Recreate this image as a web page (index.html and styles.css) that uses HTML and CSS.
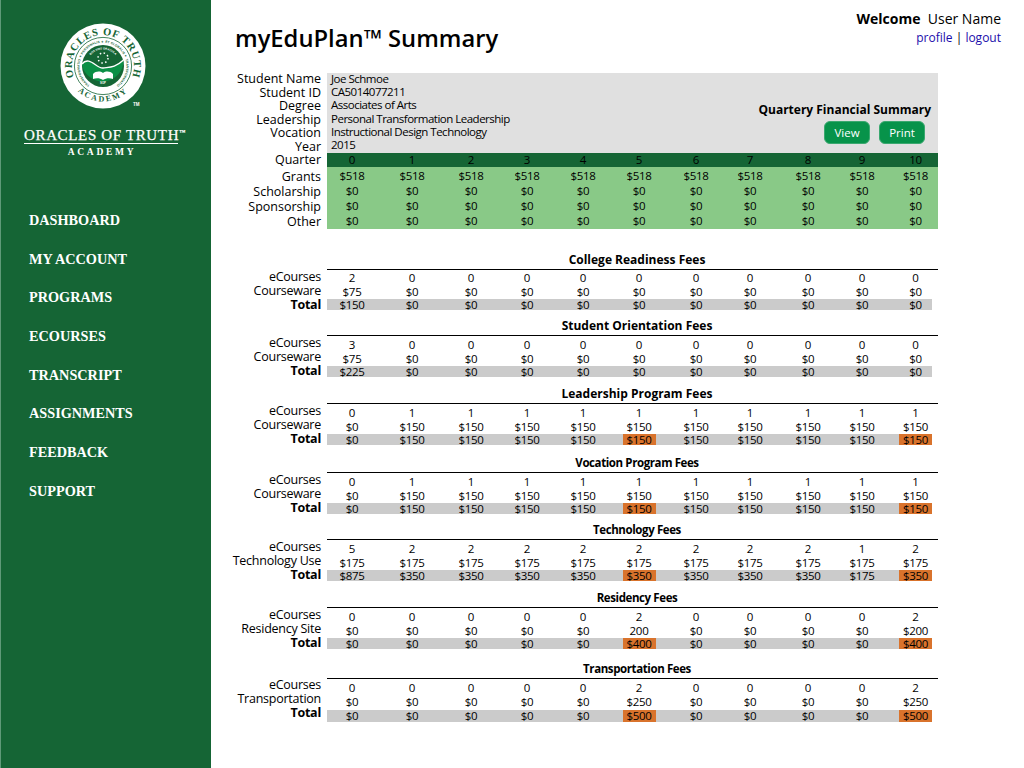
FILE: index.html
```html
<!DOCTYPE html>
<html lang="en">
<head>
    <meta charset="UTF-8">
    <title>myEduPlan Summary</title>
    <link rel="stylesheet" href="styles.css">
</head>
<body>
<div class="page">
    <aside class="sidebar">
        <div class="logo">
            <svg width="100" height="104" viewBox="0 0 100 104">
                <defs>
                    <path id="arcTop" d="M23.15 64.5a31 31 0 1 1 53.7 0"/>
                    <path id="arcBottom" d="M14.5 49a35.5 35.5 0 0 0 71 0"/>
                    <path id="arcInner" d="M50 72.4a23.4 23.4 0 1 1 .01 0"/>
                    <path id="arcMotto" d="M33.5 49a16.5 16.5 0 0 1 33 0"/>
                </defs>
                <circle cx="50" cy="49" r="42.5" fill="#fff"/>
                <circle cx="50" cy="49" r="28.6" fill="none" stroke="#156535" stroke-width=".8"/>
                <text class="logo-ring"><textPath href="#arcTop" startOffset="50%" text-anchor="middle">ORACLES OF TRUTH</textPath></text>
                <text class="logo-academy"><textPath href="#arcBottom" startOffset="50%" text-anchor="middle">ACADEMY</textPath></text>
                <text class="logo-tiny"><textPath href="#arcInner" startOffset="50%" text-anchor="middle">TRANSFORMATIO ✦ PERSONALIS ✦ ET GLOBALIS ✦ TRANSFORMATIO</textPath></text>
                <circle cx="50" cy="49" r="21" fill="#156535"/>
                <path d="M29 47c7-9 15 5 21 4s12 0 20.500-8a21 21 0 0 1-41.500 5z" fill="#0a8f45"/>
                <path d="M29 47c7-9 15 5 21 4s12 0 20.500-8" fill="none" stroke="#fff" stroke-width="1.4"/>
                <text class="logo-motto"><textPath href="#arcMotto" startOffset="50%" text-anchor="middle">BOS VINT ORACULA</textPath></text>
                <circle cx="50" cy="41" r="5" fill="none" stroke="#fff" stroke-width="1.5" stroke-dasharray="1.5 2.43"/>
                <path d="M40 62v-5c3-3 7-3 10-1 3-2 7-2 10 1v5c-3-1-7-1-10 1-3-2-7-2-10-1z" fill="#fff"/>
                <text x="50" y="67" class="logo-sop">SOP</text>
                <text x="80" y="89" class="logo-tm">TM</text>
            </svg>
        </div>
        <div class="brand">
            <div class="brand-name">ORACLES OF TRUTH<sup>™</sup></div>
            <div class="brand-sub">ACADEMY</div>
        </div>
        <nav class="nav">
            <a href="#">DASHBOARD</a>
            <a href="#">MY ACCOUNT</a>
            <a href="#">PROGRAMS</a>
            <a href="#">ECOURSES</a>
            <a href="#">TRANSCRIPT</a>
            <a href="#">ASSIGNMENTS</a>
            <a href="#">FEEDBACK</a>
            <a href="#">SUPPORT</a>
        </nav>
    </aside>

    <main class="main">
        <header class="top">
            <h1>myEduPlan™ Summary</h1>
            <div class="user">
                <div class="user-name"><b>Welcome</b>&nbsp; User Name</div>
                <div class="user-links"><a href="#">profile</a> | <a href="#">logout</a></div>
            </div>
        </header>

        <section class="summary">
            <div class="labels info-labels">
                <div>Student Name</div><div>Student ID</div><div>Degree</div><div>Leadership</div><div>Vocation</div><div>Year</div>
            </div>
            <div class="info">
                <div class="info-text">
                    <div>Joe Schmoe</div><div>CA5014077211</div><div>Associates of Arts</div><div>Personal Transformation Leadership</div><div>Instructional Design Technology</div><div>2015</div>
                </div>
                <div class="info-side">
                    <div class="info-title">Quartery Financial Summary</div>
                    <div class="buttons"><button>View</button><button>Print</button></div>
                </div>
            </div>
            <div class="labels quarter-label"><div>Quarter</div></div>
            <div class="row quarter"><span>0</span><span>1</span><span>2</span><span>3</span><span>4</span><span>5</span><span>6</span><span>7</span><span>8</span><span>9</span><span>10</span></div>
            <div class="labels fund-labels">
                <div>Grants</div><div>Scholarship</div><div>Sponsorship</div><div>Other</div>
            </div>
            <div class="funds">
                <div class="row"><span>$518</span><span>$518</span><span>$518</span><span>$518</span><span>$518</span><span>$518</span><span>$518</span><span>$518</span><span>$518</span><span>$518</span><span>$518</span></div>
                <div class="row"><span>$0</span><span>$0</span><span>$0</span><span>$0</span><span>$0</span><span>$0</span><span>$0</span><span>$0</span><span>$0</span><span>$0</span><span>$0</span></div>
                <div class="row"><span>$0</span><span>$0</span><span>$0</span><span>$0</span><span>$0</span><span>$0</span><span>$0</span><span>$0</span><span>$0</span><span>$0</span><span>$0</span></div>
                <div class="row"><span>$0</span><span>$0</span><span>$0</span><span>$0</span><span>$0</span><span>$0</span><span>$0</span><span>$0</span><span>$0</span><span>$0</span><span>$0</span></div>
            </div>
        </section>

        <section class="fee fee-college">
            <h2>College Readiness Fees</h2>
            <div class="fee-body">
                <div class="labels"><div>eCourses</div><div>Courseware</div><div class="label-total">Total</div></div>
                <div class="rows">
                    <div class="row"><span>2</span><span>0</span><span>0</span><span>0</span><span>0</span><span>0</span><span>0</span><span>0</span><span>0</span><span>0</span><span>0</span></div>
                    <div class="row"><span>$75</span><span>$0</span><span>$0</span><span>$0</span><span>$0</span><span>$0</span><span>$0</span><span>$0</span><span>$0</span><span>$0</span><span>$0</span></div>
                    <div class="row total"><span>$150</span><span>$0</span><span>$0</span><span>$0</span><span>$0</span><span>$0</span><span>$0</span><span>$0</span><span>$0</span><span>$0</span><span>$0</span></div>
                </div>
            </div>
        </section>

        <section class="fee fee-orientation">
            <h2>Student Orientation Fees</h2>
            <div class="fee-body">
                <div class="labels"><div>eCourses</div><div>Courseware</div><div class="label-total">Total</div></div>
                <div class="rows">
                    <div class="row"><span>3</span><span>0</span><span>0</span><span>0</span><span>0</span><span>0</span><span>0</span><span>0</span><span>0</span><span>0</span><span>0</span></div>
                    <div class="row"><span>$75</span><span>$0</span><span>$0</span><span>$0</span><span>$0</span><span>$0</span><span>$0</span><span>$0</span><span>$0</span><span>$0</span><span>$0</span></div>
                    <div class="row total"><span>$225</span><span>$0</span><span>$0</span><span>$0</span><span>$0</span><span>$0</span><span>$0</span><span>$0</span><span>$0</span><span>$0</span><span>$0</span></div>
                </div>
            </div>
        </section>

        <section class="fee fee-leadership">
            <h2>Leadership Program Fees</h2>
            <div class="fee-body">
                <div class="labels"><div>eCourses</div><div>Courseware</div><div class="label-total">Total</div></div>
                <div class="rows">
                    <div class="row"><span>0</span><span>1</span><span>1</span><span>1</span><span>1</span><span>1</span><span>1</span><span>1</span><span>1</span><span>1</span><span>1</span></div>
                    <div class="row"><span>$0</span><span>$150</span><span>$150</span><span>$150</span><span>$150</span><span>$150</span><span>$150</span><span>$150</span><span>$150</span><span>$150</span><span>$150</span></div>
                    <div class="row total"><span>$0</span><span>$150</span><span>$150</span><span>$150</span><span>$150</span><span class="due">$150</span><span>$150</span><span>$150</span><span>$150</span><span>$150</span><span class="due">$150</span></div>
                </div>
            </div>
        </section>

        <section class="fee fee-vocation">
            <h2 class="narrow">Vocation Program Fees</h2>
            <div class="fee-body">
                <div class="labels"><div>eCourses</div><div>Courseware</div><div class="label-total">Total</div></div>
                <div class="rows">
                    <div class="row"><span>0</span><span>1</span><span>1</span><span>1</span><span>1</span><span>1</span><span>1</span><span>1</span><span>1</span><span>1</span><span>1</span></div>
                    <div class="row"><span>$0</span><span>$150</span><span>$150</span><span>$150</span><span>$150</span><span>$150</span><span>$150</span><span>$150</span><span>$150</span><span>$150</span><span>$150</span></div>
                    <div class="row total"><span>$0</span><span>$150</span><span>$150</span><span>$150</span><span>$150</span><span class="due">$150</span><span>$150</span><span>$150</span><span>$150</span><span>$150</span><span class="due">$150</span></div>
                </div>
            </div>
        </section>

        <section class="fee fee-technology">
            <h2 class="narrow">Technology Fees</h2>
            <div class="fee-body">
                <div class="labels"><div>eCourses</div><div>Technology Use</div><div class="label-total">Total</div></div>
                <div class="rows">
                    <div class="row"><span>5</span><span>2</span><span>2</span><span>2</span><span>2</span><span>2</span><span>2</span><span>2</span><span>2</span><span>1</span><span>2</span></div>
                    <div class="row"><span>$175</span><span>$175</span><span>$175</span><span>$175</span><span>$175</span><span>$175</span><span>$175</span><span>$175</span><span>$175</span><span>$175</span><span>$175</span></div>
                    <div class="row total"><span>$875</span><span>$350</span><span>$350</span><span>$350</span><span>$350</span><span class="due">$350</span><span>$350</span><span>$350</span><span>$350</span><span>$175</span><span class="due">$350</span></div>
                </div>
            </div>
        </section>

        <section class="fee fee-residency">
            <h2 class="narrow">Residency Fees</h2>
            <div class="fee-body">
                <div class="labels"><div>eCourses</div><div>Residency Site</div><div class="label-total">Total</div></div>
                <div class="rows">
                    <div class="row"><span>0</span><span>0</span><span>0</span><span>0</span><span>0</span><span>2</span><span>0</span><span>0</span><span>0</span><span>0</span><span>2</span></div>
                    <div class="row"><span>$0</span><span>$0</span><span>$0</span><span>$0</span><span>$0</span><span>200</span><span>$0</span><span>$0</span><span>$0</span><span>$0</span><span>$200</span></div>
                    <div class="row total"><span>$0</span><span>$0</span><span>$0</span><span>$0</span><span>$0</span><span class="due">$400</span><span>$0</span><span>$0</span><span>$0</span><span>$0</span><span class="due">$400</span></div>
                </div>
            </div>
        </section>

        <section class="fee fee-transport">
            <h2 class="narrow">Transportation Fees</h2>
            <div class="fee-body">
                <div class="labels"><div>eCourses</div><div>Transportation</div><div class="label-total">Total</div></div>
                <div class="rows">
                    <div class="row"><span>0</span><span>0</span><span>0</span><span>0</span><span>0</span><span>2</span><span>0</span><span>0</span><span>0</span><span>0</span><span>2</span></div>
                    <div class="row"><span>$0</span><span>$0</span><span>$0</span><span>$0</span><span>$0</span><span>$250</span><span>$0</span><span>$0</span><span>$0</span><span>$0</span><span>$250</span></div>
                    <div class="row total"><span>$0</span><span>$0</span><span>$0</span><span>$0</span><span>$0</span><span class="due">$500</span><span>$0</span><span>$0</span><span>$0</span><span>$0</span><span class="due">$500</span></div>
                </div>
            </div>
        </section>
    </main>
</div>
</body>
</html>
```

FILE: styles.css
```css
* { box-sizing: border-box; }
body { margin: 0; background: #fff; color: #000; font-family: "Open Sans", sans-serif; font-size: 12px; }
.page { display: flex; width: 1024px; height: 768px; overflow: hidden; }

/* sidebar */
.sidebar { width: 211px; flex: none; background: #156535; border-left: 1px solid #5f9a78; color: #fff; padding-top: 17px; }
.logo { display: flex; justify-content: center; padding-right: 7px; height: 104px; }
.logo-ring { font: bold 10.5px "Liberation Serif", serif; letter-spacing: .75px; fill: #156535; }
.logo-academy { font: bold 8px "Liberation Serif", serif; letter-spacing: 2px; fill: #156535; }
.logo-tiny { font: bold 3.2px "Liberation Sans", sans-serif; letter-spacing: .1px; fill: #156535; }
.logo-motto { font: bold 2.8px "Liberation Sans", sans-serif; fill: #fff; }
.logo-sop { font: bold 2.8px "Liberation Sans", sans-serif; fill: #fff; text-anchor: middle; }
.logo-tm { font: bold 4.5px "Liberation Sans", sans-serif; fill: #fff; }
.brand { margin: 4px 0 0 23px; width: 154px; font-family: "Liberation Serif", serif; }
.brand-name { font-size: 15px; letter-spacing: .65px; -webkit-text-stroke: .25px #fff; border-bottom: 1px solid #fff; height: 19px; line-height: 20px; white-space: nowrap; }
.brand-name sup { font-size: 6px; line-height: 0; vertical-align: 6px; letter-spacing: 0; }
.brand-sub { font-size: 9.5px; font-weight: bold; letter-spacing: 2.7px; line-height: 16px; text-align: center; padding-left: 2px; }
.nav { display: flex; flex-direction: column; gap: 18.7px; margin: 50px 0 0 28px; }
.nav a { color: #fff; text-decoration: none; font: bold 14.25px/20px "Liberation Serif", serif; white-space: nowrap; }

/* main */
.main { flex: 1; position: relative; padding: 0 0 0 11px; }
.top { display: flex; justify-content: space-between; height: 73px; padding-right: 23px; }
.top h1 { margin: 22px 0 0 13px; font-size: 23.75px; line-height: 32px; font-weight: 600; }
.user { text-align: right; padding-top: 8px; }
.user-name { font-size: 14px; line-height: 20px; margin-top: 1px; }
.user-links { font-size: 12px; line-height: 18px; }
.user-links a { color: #1a0dab; text-decoration: none; }

/* shared value row: each track ends where its 33px cell ends */
.row { display: grid; grid-template-columns: 41.5px 60px 59px 56px 56px 56px 57px 54px 58px 54px 53.5px; text-align: center; width: 605px; font-size: 11.5px; letter-spacing: -.3px; }
.row span { justify-self: end; width: 33px; white-space: nowrap; }
.labels { text-align: right; font-size: 12.5px; white-space: nowrap; padding-right: 1px; }

/* summary block */
.summary { display: grid; grid-template-columns: 100px 611px; column-gap: 5px; }
.info { background: #e0e0e0; height: 80px; display: flex; justify-content: space-between; padding: 0 7px 0 4px; }
.info-labels { margin-top: -1px; }
.info-labels div { line-height: 13.5px; }
.info-text { font-size: 11.5px; letter-spacing: -.5px; line-height: 13.2px; margin-top: -1px; }
.info-side { text-align: right; padding-top: 29px; }
.info-title { font-weight: 700; font-size: 12px; line-height: 16px; }
.buttons { display: flex; justify-content: flex-end; gap: 9px; margin-top: 3px; padding-right: 6px; }
.buttons button { width: 46px; height: 23px; background: #07934a; border: 1px solid #3aa86f; border-radius: 6px; color: #fff; font: 11.5px "Open Sans", sans-serif; padding: 0; }
.quarter { background: #156535; height: 14px; line-height: 14px; width: 611px; padding-right: 6px; }
.quarter-label div { line-height: 14px; }
.funds { background: #89c987; height: 62px; padding-top: 1px; }
.funds .row { line-height: 15px; }
.fund-labels { padding-top: 2px; }
.fund-labels div { line-height: 15px; }

/* fee sections */
.fee h2 { margin: 0 0 0 105px; width: 611px; height: 20px; border-bottom: 1px solid #000; font-size: 12px; line-height: 19px; font-weight: 700; text-align: center; padding-left: 9px; }
.fee h2.narrow { letter-spacing: -.4px; font-size: 11.5px; }
.fee-body { display: flex; gap: 5px; }
.fee-body .labels { width: 100px; line-height: 14px; letter-spacing: -.25px; }
.rows { padding-top: 2px; width: 605px; }
.rows .row { line-height: 14px; }
.rows .row.total { background: #cbcbcb; line-height: 11px; height: 11px; }
.label-total { font-weight: 700; }
.due { background: #d9732c; }

.fee-college { margin-top: 21px; }
.fee-college .rows { padding-top: 1px; }
.fee-orientation { margin-top: 4px; }
.fee-leadership { margin-top: 6px; }
.fee-vocation { margin-top: 7px; }
.fee-technology { margin-top: 5px; }
.fee-residency { margin-top: 6px; }
.fee-transport { margin-top: 9px; }
.fee-transport .labels { margin-top: -1px; }
.fee-transport .row.total { margin-top: 1px; height: 12px; }
```
